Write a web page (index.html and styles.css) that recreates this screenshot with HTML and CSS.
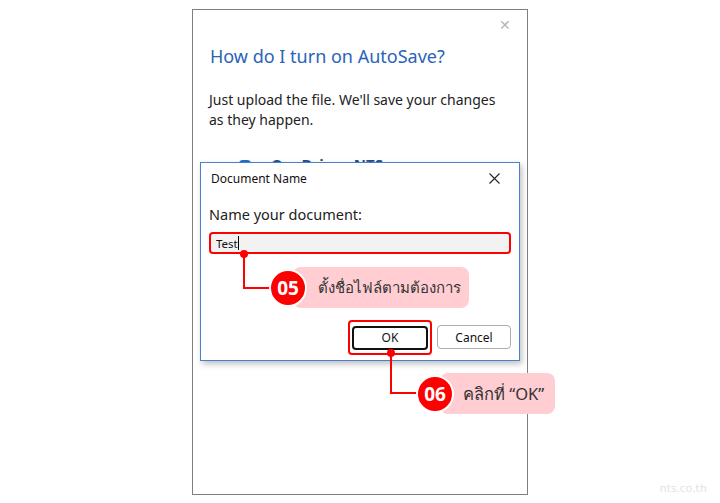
FILE: index.html
```html
<!DOCTYPE html>
<html lang="en">
<head>
<meta charset="UTF-8">
<meta name="viewport" content="width=device-width, initial-scale=1.0">
<title>AutoSave - Document Name</title>
<link rel="stylesheet" href="styles.css">
</head>
<body>

<div class="stage">
    <div class="panel">
        <div class="panel-top">
            <span class="panel-close">&#x2715;</span>
        </div>
        <h2 class="panel-title">How do I turn on AutoSave?</h2>
        <p class="panel-text">Just upload the file. We'll save your changes as they happen.</p>
        <div class="panel-row">
            <span class="cloud"></span>
            <span>OneDrive - NTS</span>
        </div>
    </div>

    <!-- dialog sits over the panel -->
    <div class="dialog">
        <div class="dialog-head">
            <span>Document Name</span>
            <svg class="dialog-x" width="11" height="11" viewBox="0 0 11 11"><path d="M0.5 0.5L10.5 10.5M10.5 0.5L0.5 10.5" stroke="#222" stroke-width="1.1"/></svg>
        </div>
        <label class="dialog-label">Name your document:</label>
        <div class="name-box"><span>Test</span><i class="caret"></i></div>
        <div class="dialog-buttons">
            <div class="mark-ok"><button class="btn btn-ok">OK</button></div>
            <button class="btn">Cancel</button>
        </div>
    </div>

    <!-- callouts -->
    <div class="line line-05v"></div>
    <div class="line line-05h"></div>
    <div class="dot dot-05"></div>
    <div class="callout callout-05">
        <span class="num">05</span>
        <span class="tag">ตั้งชื่อไฟล์ตามต้องการ</span>
    </div>

    <div class="line line-06v"></div>
    <div class="line line-06h"></div>
    <div class="dot dot-06"></div>
    <div class="callout callout-06">
        <span class="num">06</span>
        <span class="tag tag-wide">คลิกที่ &ldquo;OK&rdquo;</span>
    </div>

    <div class="watermark">nts.co.th</div>
</div>

</body>
</html>
```

FILE: styles.css
```css
body, html {
    margin: 0;
    padding: 0;
    background: #fff;
    font-family: "Noto Sans", "Open Sans", sans-serif;
    color: #222;
}
.stage {
    position: relative;
    width: 720px;
    height: 503px;
    overflow: hidden;
}
.panel {
    box-sizing: border-box;
    width: 336px;
    height: 486px;
    margin: 9px auto 0;
    border: 1px solid #7f7f7f;
    padding: 0 18px 0 16px;
}
.panel-top {
    display: flex;
    justify-content: flex-end;
    height: 30px;
    padding-top: 6px;
    box-sizing: border-box;
}
.panel-close {
    color: #b5b5b5;
    font-size: 14px;
    line-height: 18px;
    margin-right: -2px;
}
.panel-title {
    margin: 3px 0 0 1px;
    font-size: 18px;
    font-weight: normal;
    color: #2a64b8;
    line-height: 26px;
}
.panel-text {
    margin: 21px 0 0;
    font-size: 14px;
    line-height: 20px;
    color: #222;
}
.panel-row {
    display: flex;
    align-items: center;
    gap: 20px;
    margin: 24px 0 0 30px;
    font-size: 15px;
    font-weight: bold;
    color: #1f4e8c;
}
.cloud {
    width: 12px;
    height: 8px;
    border-radius: 4px;
    background: #1e6fc8;
}
.dialog {
    position: absolute;
    left: 200px;
    top: 162px;
    width: 320px;
    height: 199px;
    box-sizing: border-box;
    background: #fff;
    border: 1px solid #4a7fd0;
    box-shadow: 2px 3px 6px rgba(0, 0, 0, 0.25);
    padding: 0 8px 0 8px;
}
.dialog-head {
    display: flex;
    justify-content: space-between;
    align-items: center;
    height: 30px;
    padding: 0 11px 0 2px;
    font-size: 12px;
    color: #111;
}
.dialog-label {
    display: block;
    margin: 11px 0 0 0;
    font-size: 14.5px;
    line-height: 20px;
    color: #222;
}
.name-box {
    display: flex;
    align-items: center;
    margin-top: 8px;
    height: 22px;
    box-sizing: border-box;
    border: 2px solid #f00;
    border-radius: 4px;
    background: #f2f2f2;
    padding-left: 5px;
    font-size: 11.5px;
    color: #111;
}
.caret {
    width: 1px;
    height: 14px;
    background: #000;
}
.dialog-buttons {
    display: flex;
    justify-content: flex-end;
    align-items: center;
    gap: 5px;
    margin-top: 66px;
    padding-right: 0;
}
.mark-ok {
    border: 2px solid #f00;
    border-radius: 4px;
    padding: 3px 2px;
}
.btn {
    box-sizing: border-box;
    width: 74px;
    height: 24px;
    border: 1px solid #adadad;
    border-radius: 4px;
    background: #fff;
    font-family: "Noto Sans", sans-serif;
    font-size: 12px;
    color: #111;
    padding: 0;
}
.btn-ok {
    width: 76px;
    border: 2px solid #111;
}
.line {
    position: absolute;
    background: #f00;
}
.line-05v { left: 243px; top: 254px; width: 2px; height: 35px; }
.line-05h { left: 243px; top: 287px; width: 30px; height: 2px; }
.line-06v { left: 390px; top: 353px; width: 2px; height: 41px; }
.line-06h { left: 390px; top: 392px; width: 30px; height: 2px; }
.dot {
    position: absolute;
    width: 8px;
    height: 8px;
    border-radius: 50%;
    background: #f00;
}
.dot-05 { left: 240px; top: 250px; }
.dot-06 { left: 387px; top: 349px; }
.callout {
    position: absolute;
    display: flex;
    align-items: center;
}
.callout-05 { left: 269px; top: 267px; }
.callout-06 { left: 416px; top: 373px; }
.num {
    position: relative;
    z-index: 1;
    width: 34px;
    height: 34px;
    border-radius: 50%;
    border: 2px solid #fff;
    background: #f00;
    color: #fff;
    font-family: "Open Sans", sans-serif;
    font-weight: bold;
    font-size: 19px;
    display: flex;
    align-items: center;
    justify-content: center;
}
.tag {
    margin-left: -14px;
    height: 41px;
    display: flex;
    align-items: center;
    background: #ffcdd2;
    border-radius: 8px;
    padding: 0 8px 0 25px;
    font-size: 15px;
    color: #333;
}
.tag-wide {
    font-size: 16.5px;
    padding: 0 11px 0 23px;
}
.watermark {
    position: absolute;
    right: 13px;
    bottom: 8px;
    font-size: 11px;
    color: #e2e2e2;
    letter-spacing: 0.3px;
}
```
